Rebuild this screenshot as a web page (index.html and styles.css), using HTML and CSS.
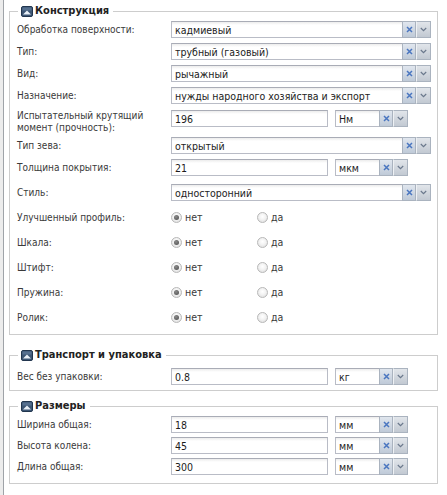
FILE: index.html
```html
<!DOCTYPE html>
<html lang="ru">
<head>
<meta charset="utf-8">
<title>Форма</title>
<link rel="stylesheet" href="styles.css">
</head>
<body>
<div class="page">

  <fieldset class="fs fs-1">
    <legend class="lg"><svg class="lg-icon" width="12" height="11" viewBox="0 0 12 11"><rect x="0.5" y="0.5" width="11" height="10" rx="1.5" fill="#3d5674" stroke="#22364e"/><rect x="1.5" y="1.5" width="9" height="3" fill="#56708f"/><path d="M2 8.5 L6 4.5 L10 8.5 Z" fill="#e9f0f8"/></svg><span>Конструкция</span></legend>
    <div class="body body-1">
      <div class="row"><span class="lbl">Обработка поверхности:</span>
        <div class="combo combo-wide"><span class="inp">кадмиевый</span><span class="trg clr"><svg width="7" height="7" viewBox="0 0 7 7"><path d="M1 1 L6 6 M6 1 L1 6"/></svg></span><span class="trg drop"><svg width="7" height="5" viewBox="0 0 7 5"><path d="M0.8 1 L3.5 3.6 L6.2 1"/></svg></span></div></div>
      <div class="row"><span class="lbl">Тип:</span>
        <div class="combo combo-wide"><span class="inp">трубный (газовый)</span><span class="trg clr"><svg width="7" height="7" viewBox="0 0 7 7"><path d="M1 1 L6 6 M6 1 L1 6"/></svg></span><span class="trg drop"><svg width="7" height="5" viewBox="0 0 7 5"><path d="M0.8 1 L3.5 3.6 L6.2 1"/></svg></span></div></div>
      <div class="row"><span class="lbl">Вид:</span>
        <div class="combo combo-wide"><span class="inp">рычажный</span><span class="trg clr"><svg width="7" height="7" viewBox="0 0 7 7"><path d="M1 1 L6 6 M6 1 L1 6"/></svg></span><span class="trg drop"><svg width="7" height="5" viewBox="0 0 7 5"><path d="M0.8 1 L3.5 3.6 L6.2 1"/></svg></span></div></div>
      <div class="row"><span class="lbl">Назначение:</span>
        <div class="combo combo-wide"><span class="inp">нужды народного хозяйства и экспорт</span><span class="trg clr"><svg width="7" height="7" viewBox="0 0 7 7"><path d="M1 1 L6 6 M6 1 L1 6"/></svg></span><span class="trg drop"><svg width="7" height="5" viewBox="0 0 7 5"><path d="M0.8 1 L3.5 3.6 L6.2 1"/></svg></span></div></div>
      <div class="row row-tall"><span class="lbl lbl-2">Испытательный крутящий момент (прочность):</span>
        <span class="num">196</span>
        <div class="combo combo-unit"><span class="inp">Нм</span><span class="trg clr"><svg width="7" height="7" viewBox="0 0 7 7"><path d="M1 1 L6 6 M6 1 L1 6"/></svg></span><span class="trg drop"><svg width="7" height="5" viewBox="0 0 7 5"><path d="M0.8 1 L3.5 3.6 L6.2 1"/></svg></span></div></div>
      <div class="row"><span class="lbl">Тип зева:</span>
        <div class="combo combo-wide"><span class="inp">открытый</span><span class="trg clr"><svg width="7" height="7" viewBox="0 0 7 7"><path d="M1 1 L6 6 M6 1 L1 6"/></svg></span><span class="trg drop"><svg width="7" height="5" viewBox="0 0 7 5"><path d="M0.8 1 L3.5 3.6 L6.2 1"/></svg></span></div></div>
      <div class="row"><span class="lbl">Толщина покрытия:</span>
        <span class="num">21</span>
        <div class="combo combo-unit"><span class="inp">мкм</span><span class="trg clr"><svg width="7" height="7" viewBox="0 0 7 7"><path d="M1 1 L6 6 M6 1 L1 6"/></svg></span><span class="trg drop"><svg width="7" height="5" viewBox="0 0 7 5"><path d="M0.8 1 L3.5 3.6 L6.2 1"/></svg></span></div></div>
      <div class="row row-style"><span class="lbl">Стиль:</span>
        <div class="combo combo-wide"><span class="inp">односторонний</span><span class="trg clr"><svg width="7" height="7" viewBox="0 0 7 7"><path d="M1 1 L6 6 M6 1 L1 6"/></svg></span><span class="trg drop"><svg width="7" height="5" viewBox="0 0 7 5"><path d="M0.8 1 L3.5 3.6 L6.2 1"/></svg></span></div></div>
      <div class="rrow rrow-first"><span class="lbl">Улучшенный профиль:</span>
        <span class="ropt"><span class="radio on"></span>нет</span><span class="ropt"><span class="radio"></span>да</span></div>
      <div class="rrow"><span class="lbl">Шкала:</span>
        <span class="ropt"><span class="radio on"></span>нет</span><span class="ropt"><span class="radio"></span>да</span></div>
      <div class="rrow"><span class="lbl">Штифт:</span>
        <span class="ropt"><span class="radio on"></span>нет</span><span class="ropt"><span class="radio"></span>да</span></div>
      <div class="rrow"><span class="lbl">Пружина:</span>
        <span class="ropt"><span class="radio on"></span>нет</span><span class="ropt"><span class="radio"></span>да</span></div>
      <div class="rrow"><span class="lbl">Ролик:</span>
        <span class="ropt"><span class="radio on"></span>нет</span><span class="ropt"><span class="radio"></span>да</span></div>
    </div>
  </fieldset>

  <fieldset class="fs fs-2">
    <legend class="lg"><svg class="lg-icon" width="12" height="11" viewBox="0 0 12 11"><rect x="0.5" y="0.5" width="11" height="10" rx="1.5" fill="#3d5674" stroke="#22364e"/><rect x="1.5" y="1.5" width="9" height="3" fill="#56708f"/><path d="M2 8.5 L6 4.5 L10 8.5 Z" fill="#e9f0f8"/></svg><span>Транспорт и упаковка</span></legend>
    <div class="body body-2">
      <div class="row"><span class="lbl">Вес без упаковки:</span>
        <span class="num">0.8</span>
        <div class="combo combo-unit"><span class="inp">кг</span><span class="trg clr"><svg width="7" height="7" viewBox="0 0 7 7"><path d="M1 1 L6 6 M6 1 L1 6"/></svg></span><span class="trg drop"><svg width="7" height="5" viewBox="0 0 7 5"><path d="M0.8 1 L3.5 3.6 L6.2 1"/></svg></span></div></div>
    </div>
  </fieldset>

  <fieldset class="fs fs-3">
    <legend class="lg"><svg class="lg-icon" width="12" height="11" viewBox="0 0 12 11"><rect x="0.5" y="0.5" width="11" height="10" rx="1.5" fill="#3d5674" stroke="#22364e"/><rect x="1.5" y="1.5" width="9" height="3" fill="#56708f"/><path d="M2 8.5 L6 4.5 L10 8.5 Z" fill="#e9f0f8"/></svg><span>Размеры</span></legend>
    <div class="body body-3">
      <div class="row"><span class="lbl">Ширина общая:</span>
        <span class="num">18</span>
        <div class="combo combo-unit"><span class="inp">мм</span><span class="trg clr"><svg width="7" height="7" viewBox="0 0 7 7"><path d="M1 1 L6 6 M6 1 L1 6"/></svg></span><span class="trg drop"><svg width="7" height="5" viewBox="0 0 7 5"><path d="M0.8 1 L3.5 3.6 L6.2 1"/></svg></span></div></div>
      <div class="row"><span class="lbl">Высота колена:</span>
        <span class="num">45</span>
        <div class="combo combo-unit"><span class="inp">мм</span><span class="trg clr"><svg width="7" height="7" viewBox="0 0 7 7"><path d="M1 1 L6 6 M6 1 L1 6"/></svg></span><span class="trg drop"><svg width="7" height="5" viewBox="0 0 7 5"><path d="M0.8 1 L3.5 3.6 L6.2 1"/></svg></span></div></div>
      <div class="row"><span class="lbl">Длина общая:</span>
        <span class="num">300</span>
        <div class="combo combo-unit"><span class="inp">мм</span><span class="trg clr"><svg width="7" height="7" viewBox="0 0 7 7"><path d="M1 1 L6 6 M6 1 L1 6"/></svg></span><span class="trg drop"><svg width="7" height="5" viewBox="0 0 7 5"><path d="M0.8 1 L3.5 3.6 L6.2 1"/></svg></span></div></div>
    </div>
  </fieldset>

</div>
</body>
</html>
```

FILE: styles.css
```css
* { box-sizing: border-box; }

html, body {
  margin: 0;
  padding: 0;
  background: #fff;
}

body {
  font-family: "DejaVu Sans Condensed", "DejaVu Sans", sans-serif;
  font-size: 10px;
  color: #3a3a3a;
  background: linear-gradient(to right, #ececec 0, #ececec 3px, #fff 3px);
  min-height: 495px;
}

.page {
  margin-left: 3px;
  border-left: 1px solid #9fa3a8;
  padding: 4px 9px 0 5px;
  min-height: 495px;
  background: #fff;
}

.fs {
  margin: 0;
  border: 1px solid #cdcdcd;
  padding: 0 6px 0 7px;
  min-width: 0;
}

.fs-2 { margin-top: 13px; }
.fs-3 { margin-top: 8px; }

.lg {
  padding: 0 4px 0 3px;
  margin-left: 1px;
  height: 14px;
  display: flex;
  align-items: center;
  gap: 2px;
  font-weight: bold;
  font-size: 11px;
  color: #222;
  line-height: 14px;
}

.lg-icon { display: block; flex: none; }

.body {
  display: flex;
  flex-direction: column;
  gap: 5px;
}

.body-1 { padding: 3px 0 7px; }
.body-2 { padding: 6px 0 5px; }
.body-3 { padding: 3px 0 8px; gap: 4px; }

.row {
  display: flex;
  align-items: center;
  height: 17px;
}

.row-tall {
  height: 23px;
  align-items: flex-start;
}
.row-tall .num,
.row-tall .combo { margin-top: 1px; }

.row-style { margin-top: 3px; }

.lbl {
  width: 154px;
  flex: none;
  line-height: 13px;
  color: #3a3a3a;
}

.lbl-2 { line-height: 12px; width: 140px; margin-right: 14px; padding-top: 1px; }

.combo {
  display: flex;
  height: 17px;
  flex: none;
}

.combo-wide { width: 260px; }
.combo-unit { width: 73px; margin-left: 7px; }

.inp,
.num {
  display: flex;
  align-items: center;
  height: 17px;
  border: 1px solid #b9bcc6;
  border-top-color: #a9acb6;
  background: linear-gradient(#ececec 0, #fff 3px);
  padding: 0 3px;
  color: #1c1c1c;
  font-size: 10.5px;
  white-space: nowrap;
  overflow: hidden;
}

.inp { flex: 1; min-width: 0; border-right: none; }

.num { width: 157px; flex: none; }

.trg {
  width: 15px;
  height: 17px;
  flex: none;
  display: flex;
  align-items: center;
  justify-content: center;
  border: 1px solid #aab3bf;
}

.trg.clr {
  width: 14px;
  background: linear-gradient(#e0e6ee, #bfcad8);
}
.trg.clr path {
  stroke: #4a76c0;
  stroke-width: 1.5;
  fill: none;
}

.trg.drop {
  border-left: 1px solid #eef1f4;
  background: linear-gradient(#e1e5ea, #c2c9d2);
}
.trg.drop path {
  stroke: #6a788c;
  stroke-width: 1.2;
  fill: none;
}

.rrow {
  display: flex;
  align-items: center;
  height: 20px;
}

.rrow-first { margin-top: 1px; }

.ropt {
  display: flex;
  align-items: center;
  width: 86px;
  color: #3a3a3a;
  font-size: 10.5px;
}

.radio {
  width: 11px;
  height: 11px;
  border-radius: 50%;
  border: 1px solid #b8b8b8;
  background: radial-gradient(circle at 50% 40%, #fff 0, #f2f2f2 45%, #d8d8d8 100%);
  margin-right: 3px;
  flex: none;
  display: flex;
  align-items: center;
  justify-content: center;
}

.radio.on::after {
  content: "";
  width: 5px;
  height: 5px;
  border-radius: 50%;
  background: radial-gradient(circle at 40% 35%, #8a8a8a, #4a4a4a);
}
```
